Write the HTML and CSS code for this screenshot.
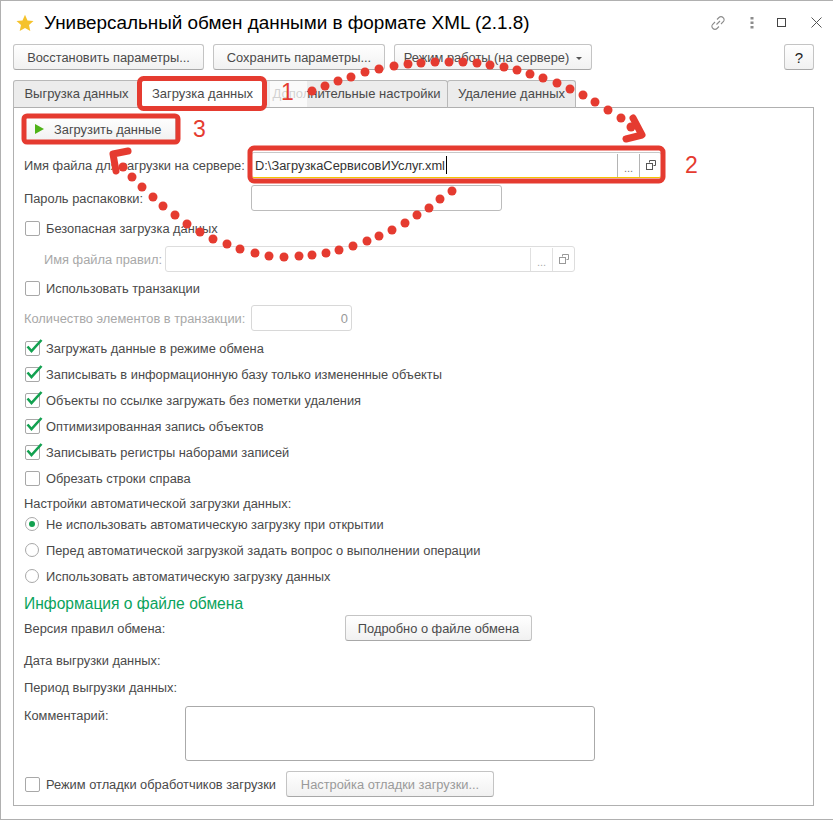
FILE: index.html
```html
<!DOCTYPE html>
<html lang="ru">
<head>
    <meta charset="UTF-8">
    <title>Универсальный обмен данными в формате XML</title>
    <link rel="stylesheet" href="styles.css">
</head>
<body>
<div class="window">

    <!-- Заголовок -->
    <div class="titlebar">
        <svg class="star" width="18" height="18" viewBox="0 0 18 18"><path d="M9 .8l2.5 5.6 6 .6-4.5 4 1.3 6L9 13.9 3.700 17l1.300-6L.5 7l6-.6z" fill="#f5c22b"/></svg>
        <div class="title">Универсальный обмен данными в формате XML (2.1.8)</div>
        <div class="win-icons">
            <svg width="16" height="16" viewBox="0 0 16 16" fill="none" stroke="#8c8c8c" stroke-width="1.100"><path d="M6.500 9.500l3.500-3.500M7 4.500l2-2a2.800 2.800 0 0 1 4 0 2.800 2.800 0 0 1 .5 4l-2.500 2.500M9 11.500l-2 2a2.800 2.800 0 0 1-4 0 2.800 2.800 0 0 1-.5-4L5 7"/></svg>
            <svg width="4" height="12" viewBox="0 0 4 12" fill="#8c8c8c"><rect x="0.500" y="0" width="3" height="2.500"/><rect x="0.500" y="4.500" width="3" height="2.500"/><rect x="0.500" y="9" width="3" height="2.500"/></svg>
            <span class="win-square"></span>
            <svg width="11" height="11" viewBox="0 0 11 11" stroke="#555" stroke-width="1"><path d="M.5.500l10 10M10.500.500l-10 10"/></svg>
        </div>
    </div>

    <!-- Кнопки -->
    <div class="toolbar">
        <button class="btn btn-restore">Восстановить параметры...</button>
        <button class="btn btn-save">Сохранить параметры...</button>
        <button class="btn btn-mode">Режим работы (на сервере)<span class="caret"></span></button>
        <button class="btn btn-help">?</button>
    </div>

    <!-- Закладки -->
    <div class="tabs">
        <div class="tab tab-first">Выгрузка данных</div>
        <div class="tab tab-active">Загрузка данных</div>
        <div class="tab tab-third">Дополнительные настройки</div>
        <div class="tab tab-last">Удаление данных</div>
    </div>

    <div class="panel">
        <div class="row">
            <button class="btn btn-load"><span class="play"></span>Загрузить данные</button>
        </div>

        <div class="row row-file">
            <label class="label label-file">Имя файла для загрузки на сервере:</label>
            <div class="field field-file">
                <span class="field-text">D:\ЗагрузкаСервисовИУслуг.xml</span><span class="text-caret"></span>
                <span class="field-btn field-dots">...</span>
                <span class="field-btn">
                    <svg width="10" height="10" viewBox="0 0 10 10" fill="none" stroke="#555"><path d="M3.500 2.500V.5h6v5H7.500"/><rect x="0.500" y="3.500" width="6" height="6"/></svg>
                </span>
            </div>
        </div>

        <div class="row row-pass">
            <label class="label label-file">Пароль распаковки:</label>
            <div class="field field-pass"></div>
        </div>

        <div class="row row-safe">
            <span class="check"></span><span class="check-text">Безопасная загрузка данных</span>
        </div>

        <div class="row row-rules">
            <label class="label label-rules">Имя файла правил:</label>
            <div class="field field-rules">
                <span class="field-text"></span>
                <span class="field-btn field-dots">...</span>
                <span class="field-btn">
                    <svg width="10" height="10" viewBox="0 0 10 10" fill="none" stroke="#999"><path d="M3.500 2.500V.5h6v5H7.500"/><rect x="0.500" y="3.500" width="6" height="6"/></svg>
                </span>
            </div>
        </div>

        <div class="row row-trans">
            <span class="check"></span><span class="check-text">Использовать транзакции</span>
        </div>

        <div class="row row-count">
            <label class="label label-file label-off">Количество элементов в транзакции:</label>
            <div class="field field-count">0</div>
        </div>

        <div class="checks">
            <div class="row">
                <span class="check on"><svg class="tick" width="17" height="15" viewBox="0 0 17 15"><path d="M1.500 7.500l4 4.500L15.500 1" fill="none" stroke="#12a150" stroke-width="2.600"/></svg></span>
                <span class="check-text">Загружать данные в режиме обмена</span>
            </div>
            <div class="row">
                <span class="check on"><svg class="tick" width="17" height="15" viewBox="0 0 17 15"><path d="M1.500 7.500l4 4.500L15.500 1" fill="none" stroke="#12a150" stroke-width="2.600"/></svg></span>
                <span class="check-text">Записывать в информационную базу только измененные объекты</span>
            </div>
            <div class="row">
                <span class="check on"><svg class="tick" width="17" height="15" viewBox="0 0 17 15"><path d="M1.500 7.500l4 4.500L15.500 1" fill="none" stroke="#12a150" stroke-width="2.600"/></svg></span>
                <span class="check-text">Объекты по ссылке загружать без пометки удаления</span>
            </div>
            <div class="row">
                <span class="check on"><svg class="tick" width="17" height="15" viewBox="0 0 17 15"><path d="M1.500 7.500l4 4.500L15.500 1" fill="none" stroke="#12a150" stroke-width="2.600"/></svg></span>
                <span class="check-text">Оптимизированная запись объектов</span>
            </div>
            <div class="row">
                <span class="check on"><svg class="tick" width="17" height="15" viewBox="0 0 17 15"><path d="M1.500 7.500l4 4.500L15.500 1" fill="none" stroke="#12a150" stroke-width="2.600"/></svg></span>
                <span class="check-text">Записывать регистры наборами записей</span>
            </div>
            <div class="row">
                <span class="check"></span><span class="check-text">Обрезать строки справа</span>
            </div>
        </div>

        <div class="auto-title">Настройки автоматической загрузки данных:</div>
        <div class="row"><span class="radio on"></span><span class="check-text">Не использовать автоматическую загрузку при открытии</span></div>
        <div class="row"><span class="radio"></span><span class="check-text">Перед автоматической загрузкой задать вопрос о выполнении операции</span></div>
        <div class="row"><span class="radio"></span><span class="check-text">Использовать автоматическую загрузку данных</span></div>

        <div class="group-title">Информация о файле обмена</div>
        <div class="row">
            <label class="label label-version">Версия правил обмена:</label>
            <button class="btn btn-details">Подробно о файле обмена</button>
        </div>
        <div class="row row-date"><label class="label">Дата выгрузки данных:</label></div>
        <div class="row row-period"><label class="label">Период выгрузки данных:</label></div>
        <div class="row-comment">
            <label class="label label-comment">Комментарий:</label>
            <div class="field field-comment"></div>
        </div>
        <div class="row row-debug">
            <span class="check"></span><span class="check-text">Режим отладки обработчиков загрузки</span>
            <button class="btn btn-debug">Настройка отладки загрузки...</button>
        </div>
    </div>
</div>

<!-- Пометки поверх окна -->
<svg class="notes" width="833" height="820" viewBox="0 0 833 820">
    <rect x="270" y="81" width="37" height="26" fill="#fff" fill-opacity="0.75"/>
    <g fill="none" stroke="#e53b30" stroke-width="5">
        <rect x="139.500" y="78.500" width="125" height="30" rx="4"/>
        <rect x="24" y="116" width="154" height="26" rx="3"/>
        <rect x="250" y="148" width="413" height="33" rx="4"/>
        <path d="M633 118l9 17-16 4M128 151l-15 3 3 17" stroke-width="7" stroke-linecap="round" stroke-linejoin="round"/>
    </g>
    <g fill="#e53b30">
        <circle cx="312" cy="91" r="4.500"/><circle cx="325" cy="86" r="4.500"/><circle cx="338" cy="81" r="4.500"/><circle cx="351" cy="77" r="4.500"/>
        <circle cx="365" cy="72" r="4.500"/><circle cx="379" cy="69" r="4.500"/><circle cx="394" cy="66" r="4.500"/><circle cx="408" cy="64" r="4.500"/>
        <circle cx="421" cy="63" r="4.500"/><circle cx="435" cy="62" r="4.500"/><circle cx="449" cy="62" r="4.500"/><circle cx="463" cy="62" r="4.500"/>
        <circle cx="477" cy="63" r="4.500"/><circle cx="490" cy="65" r="4.500"/><circle cx="504" cy="67" r="4.500"/><circle cx="517" cy="70" r="4.500"/>
        <circle cx="530" cy="74" r="4.500"/><circle cx="543" cy="78" r="4.500"/><circle cx="557" cy="83" r="4.500"/><circle cx="570" cy="89" r="4.500"/>
        <circle cx="583" cy="95" r="4.500"/><circle cx="595" cy="102" r="4.500"/><circle cx="608" cy="110" r="4.500"/><circle cx="621" cy="118" r="4.500"/>
        <circle cx="631" cy="127" r="4.500"/>

        <circle cx="452" cy="191" r="4.500"/><circle cx="440" cy="199" r="4.500"/><circle cx="429" cy="208" r="4.500"/><circle cx="417" cy="215" r="4.500"/>
        <circle cx="405" cy="223" r="4.500"/><circle cx="392" cy="230" r="4.500"/><circle cx="379" cy="236" r="4.500"/><circle cx="367" cy="241" r="4.500"/>
        <circle cx="353" cy="246" r="4.500"/><circle cx="339" cy="250" r="4.500"/><circle cx="326" cy="253" r="4.500"/><circle cx="312" cy="255" r="4.500"/>
        <circle cx="299" cy="256" r="4.500"/><circle cx="284" cy="257" r="4.500"/><circle cx="269" cy="256" r="4.500"/><circle cx="255" cy="253" r="4.500"/>
        <circle cx="240" cy="249" r="4.500"/><circle cx="227" cy="244" r="4.500"/><circle cx="213" cy="239" r="4.500"/><circle cx="200" cy="232" r="4.500"/>
        <circle cx="187" cy="224" r="4.500"/><circle cx="175" cy="215" r="4.500"/><circle cx="163" cy="206" r="4.500"/><circle cx="153" cy="197" r="4.500"/>
        <circle cx="142" cy="187" r="4.500"/><circle cx="132" cy="177" r="4.500"/><circle cx="123" cy="167" r="4.500"/>
    </g>
    <g class="note-num">
        <text x="281" y="100">1</text>
        <text x="685" y="173">2</text>
        <text x="193" y="137">3</text>
    </g>
</svg>
</body>
</html>
```
FILE: styles.css
```css
html, body {
    margin: 0;
    padding: 0;
}

body {
    width: 833px;
    height: 820px;
    position: relative;
    overflow: hidden;
    font-family: "Liberation Sans", Arial, sans-serif;
    font-size: 12.85px;
    color: #4a4a4a;
    background-color: #ffffff;
}

.window {
    box-sizing: border-box;
    height: 820px;
    border: 1px solid #b0b0b0;
    border-right: 0;
    padding: 0 19px 0 12px;
}

/* Заголовок */
.titlebar {
    display: flex;
    align-items: center;
    height: 43px;
}

.star {
    margin-left: 3px;
}

.title {
    margin-left: 10px;
    font-size: 18.9px;
    color: #000000;
    flex: 1;
}

.win-icons {
    display: flex;
    align-items: center;
    margin-right: -8px;
}

.win-icons svg:nth-child(1) { margin-right: 24px; }
.win-icons svg:nth-child(2) { margin-right: 23px; }
.win-icons svg:nth-child(4) { margin-left: 25px; }

.win-square {
    width: 7px;
    height: 7px;
    border: 1px solid #444444;
}

/* Кнопки */
.btn {
    box-sizing: border-box;
    height: 26px;
    padding: 0;
    font-family: inherit;
    font-size: 12.85px;
    color: #4a4a4a;
    background: linear-gradient(to bottom, #ffffff, #f1f1f1);
    border: 1px solid #c4c4c4;
    border-bottom-color: #a8a8a8;
    border-radius: 3px;
}

.toolbar {
    display: flex;
    height: 36px;
}

.btn-restore { width: 191px; }
.btn-save { width: 172px; margin-left: 9px; }
.btn-mode { width: 198px; margin-left: 9px; }
.btn-help { width: 30px; margin-left: auto; font-size: 15px; color: #222222; }

.caret {
    display: inline-block;
    margin-left: 7px;
    vertical-align: middle;
    border-left: 3px solid transparent;
    border-right: 3px solid transparent;
    border-top: 3px solid #555555;
}

/* Закладки */
.tabs {
    display: flex;
    height: 27px;
}

.tab {
    box-sizing: border-box;
    height: 28px;
    line-height: 26px;
    text-align: center;
    font-size: 13px;
    background-color: #ececec;
    border: 1px solid #b8b8b8;
    border-bottom: 1px solid #b0b0b0;
    border-radius: 3px 3px 0 0;
}

.tab-first { width: 127px; }
.tab-active { width: 125px; background-color: #ffffff; border-bottom-color: #ffffff; position: relative; }
.tab-third { width: 183px; }
.tab-last { width: 129px; margin-left: -1px; }

/* Основная панель */
.panel {
    box-sizing: border-box;
    height: 699px;
    padding: 8px 0 0 10px;
    border: 1px solid #b0b0b0;
}

.row {
    display: flex;
    align-items: center;
    height: 26px;
}

.row-file { margin-top: 10px; }
.row-pass { margin-top: 7px; }
.row-safe { margin-top: 4px; }
.row-rules { margin-top: 5px; }
.row-trans { margin-top: 3px; }
.row-count { margin-top: 4px; }
.checks { margin-top: 4px; }
.row-date { margin-top: 6px; }
.row-period { margin-top: 1px; }
.row-debug { margin-top: 10px; }

.btn-load {
    width: 151px;
    margin-left: 1px;
    text-align: left;
    padding-left: 9px;
    color: #4a4a4a;
}

.play {
    display: inline-block;
    margin-right: 10px;
    border-left: 9px solid #4fb318;
    border-top: 5px solid transparent;
    border-bottom: 5px solid transparent;
}

.label {
    color: #4a4a4a;
}

.label-file { width: 227px; }
.label-off { color: #a8a8a8; }
.label-rules { width: 121px; margin-left: 20px; color: #a8a8a8; }
.label-version { width: 321px; }
.label-comment { width: 161px; padding-top: 2px; }

.field {
    box-sizing: border-box;
    height: 26px;
    display: flex;
    align-items: center;
    border: 1px solid #bcbcbc;
    border-radius: 3px;
    background-color: #ffffff;
}

.field-file {
    width: 411px;
    border-color: #c8c8c8;
    border-bottom: 1px solid #f5c400;
    color: #333333;
}

.field-text {
    padding-left: 3px;
}

.text-caret {
    width: 1px;
    height: 18px;
    margin-left: 1px;
    margin-right: auto;
    background-color: #000000;
}

.field-btn {
    box-sizing: border-box;
    width: 22px;
    height: 23px;
    display: flex;
    align-items: center;
    justify-content: center;
    border-left: 1px solid #b4b4b4;
}

.field-dots {
    align-items: flex-end;
    padding-bottom: 3px;
    font-size: 11px;
    color: #777777;
}

.field-pass { width: 251px; }

.field-rules {
    width: 410px;
    border-color: #dddddd;
    color: #999999;
}

.field-rules .field-text {
    flex: 1;
}

.field-rules .field-btn {
    border-left-color: #e0e0e0;
}

.field-rules .field-dots {
    color: #aaaaaa;
}

.field-count {
    width: 101px;
    justify-content: flex-end;
    padding-right: 3px;
    border-color: #d8d8d8;
    color: #999999;
}

.check {
    box-sizing: border-box;
    width: 15px;
    height: 15px;
    margin-left: 1px;
    position: relative;
    border: 1px solid #a8a8a8;
    border-radius: 2px;
}

.tick {
    position: absolute;
    left: 0;
    top: -3px;
}

.check-text {
    margin-left: 6px;
}

.auto-title {
    margin-top: 6px;
    height: 14px;
    line-height: 14px;
}

.radio {
    box-sizing: border-box;
    width: 14px;
    height: 14px;
    margin-left: 1px;
    position: relative;
    border: 1px solid #a8a8a8;
    border-radius: 50%;
}

.radio + .check-text {
    margin-left: 7px;
}

.radio.on::after {
    content: "";
    position: absolute;
    left: 3px;
    top: 3px;
    width: 6px;
    height: 6px;
    border-radius: 50%;
    background-color: #12a150;
}

.group-title {
    height: 26px;
    line-height: 30px;
    font-size: 15.6px;
    color: #0aa35c;
}

.btn-details {
    width: 187px;
}

.row-comment {
    display: flex;
    margin-top: 6px;
}

.field-comment {
    width: 410px;
    height: 55px;
    border-color: #aaaaaa;
}

.btn-debug {
    width: 208px;
    margin-left: 10px;
    color: #9a9a9a;
}

/* Пометки */
.notes {
    position: absolute;
    left: 0;
    top: 0;
    pointer-events: none;
}

.note-num {
    font-size: 23px;
    fill: #e53b30;
}
```
